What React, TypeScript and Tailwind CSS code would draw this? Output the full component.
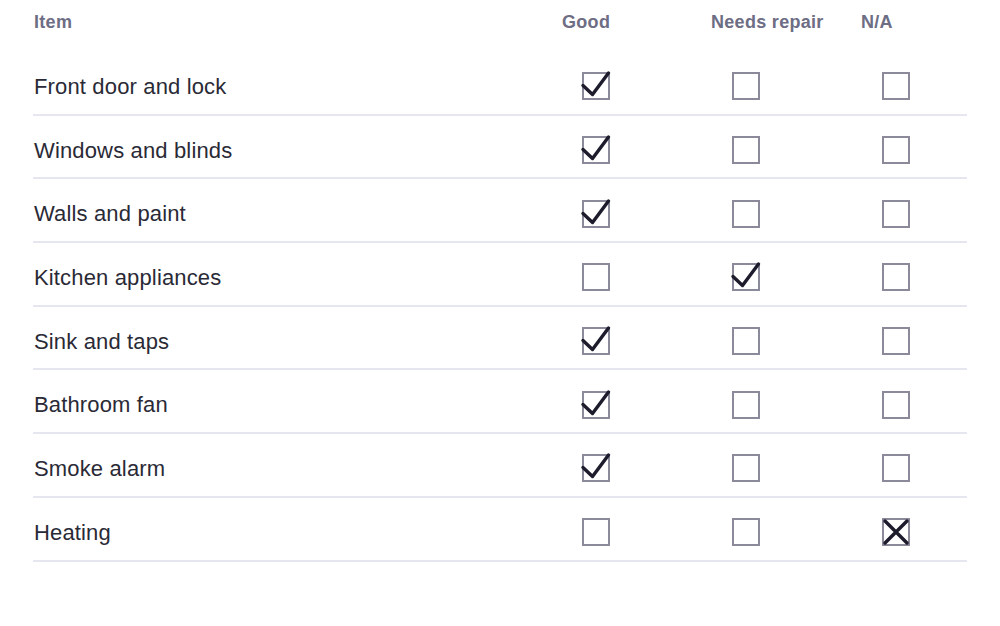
import React from 'react';

type Mark = 'check' | 'cross' | null;

const rows: { label: string; marks: [Mark, Mark, Mark] }[] = [
  { label: 'Front door and lock', marks: ['check', null, null] },
  { label: 'Windows and blinds', marks: ['check', null, null] },
  { label: 'Walls and paint', marks: ['check', null, null] },
  { label: 'Kitchen appliances', marks: [null, 'check', null] },
  { label: 'Sink and taps', marks: ['check', null, null] },
  { label: 'Bathroom fan', marks: ['check', null, null] },
  { label: 'Smoke alarm', marks: ['check', null, null] },
  { label: 'Heating', marks: [null, null, 'cross'] },
];

function Box({ mark }: { mark: Mark }) {
  return (
    <div className="relative ml-[21px] w-[28px] h-[28px] border-2 border-[#8a8a9a] bg-white">
      {mark === 'check' && (
        <svg
          className="absolute -left-[2px] -top-[2px] overflow-visible"
          width="28"
          height="28"
          viewBox="0 0 28 28"
          fill="none"
        >
          <path d="M1 13.5 L10.5 22.5 L26.5 1" stroke="#1c1c2c" strokeWidth="3.4" strokeLinecap="round" strokeLinejoin="round" />
        </svg>
      )}
      {mark === 'cross' && (
        <svg
          className="absolute -left-[2px] -top-[2px] overflow-visible"
          width="28"
          height="28"
          viewBox="0 0 28 28"
          fill="none"
        >
          <path d="M3 3 L25 25 M25 3 L3 25" stroke="#1c1c2c" strokeWidth="3.4" strokeLinecap="round" />
        </svg>
      )}
    </div>
  );
}

export default function App() {
  return (
    <div className="min-h-screen bg-white px-[33px] font-['Liberation_Sans',Arial,sans-serif]">
      {/* Header */}
      <div className="grid grid-cols-[1fr_150px_150px_106px] h-[52px] pt-[11px] text-[18px] leading-[22px] font-bold tracking-[0.3px] text-[#6d6d84]">
        <div className="pl-[1px]">Item</div>
        <div className="pl-[1px]">Good</div>
        <div>Needs repair</div>
        <div>N/A</div>
      </div>

      {/* Rows */}
      {rows.map((row) => (
        <div
          key={row.label}
          className="grid grid-cols-[1fr_150px_150px_106px] items-center h-[63.7px] pt-[7px] border-b-2 border-[#e6e6f0]"
        >
          <div className="pl-[1px] text-[22px] tracking-[0.15px] text-[#2a2a36]">{row.label}</div>
          {row.marks.map((m, i) => (
            <div key={i}>
              <Box mark={m} />
            </div>
          ))}
        </div>
      ))}
    </div>
  );
}
